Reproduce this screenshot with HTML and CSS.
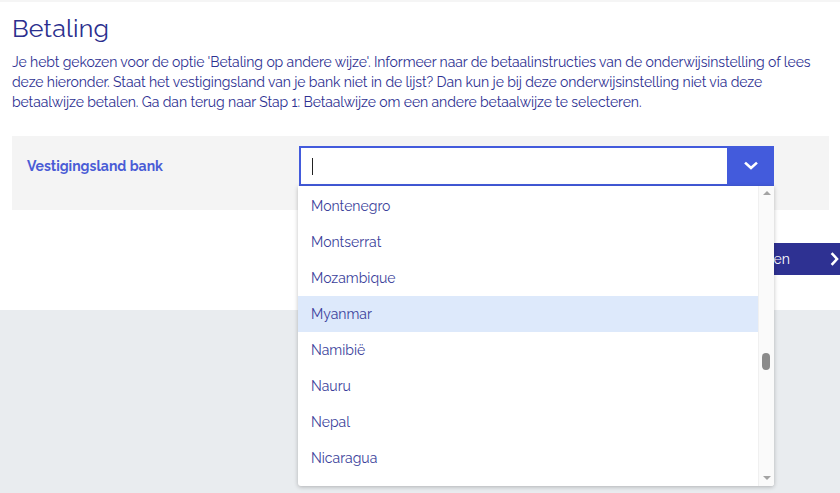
FILE: index.html
```html
<!DOCTYPE html>
<html lang="nl">
<head>
    <meta charset="UTF-8">
    <meta name="viewport" content="width=device-width, initial-scale=1.0">
    <title>Betaling</title>
    <link rel="stylesheet" href="styles.css">
</head>
<body>
    <div class="page">
        <h1>Betaling</h1>
        <p class="intro">Je hebt gekozen voor de optie 'Betaling op andere wijze'. Informeer naar de betaalinstructies van de onderwijsinstelling of lees deze hieronder. Staat het vestigingsland van je bank niet in de lijst? Dan kun je bij deze onderwijsinstelling niet via deze betaalwijze betalen. Ga dan terug naar Stap 1: Betaalwijze om een andere betaalwijze te selecteren.</p>

        <div class="panel">
            <label class="field-label" for="country">Vestigingsland bank</label>
            <div class="combo">
                <div class="combo-box">
                    <input type="text" id="country" class="combo-input" autocomplete="off">
                    <span class="caret"></span>
                    <button class="combo-toggle" type="button">
                        <svg width="14" height="10" viewBox="0 0 14 10"><path d="M2 2.5 L7 7 L12 2.5" fill="none" stroke="#fff" stroke-width="2.6" stroke-linecap="square"/></svg>
                    </button>
                </div>
                <div class="dropdown">
                    <ul class="options">
                        <li>Montenegro</li>
                        <li>Montserrat</li>
                        <li>Mozambique</li>
                        <li class="active">Myanmar</li>
                        <li>Namibië</li>
                        <li>Nauru</li>
                        <li>Nepal</li>
                        <li>Nicaragua</li>
                    </ul>
                    <div class="scrollbar">
                        <span class="arrow up"></span>
                        <span class="track"><span class="thumb"></span></span>
                        <span class="arrow down"></span>
                    </div>
                </div>
            </div>
        </div>

        <div class="actions">
            <button class="next" type="button">Betalen
                <svg width="10" height="14" viewBox="0 0 10 14"><path d="M2.5 2 L7 7 L2.5 12" fill="none" stroke="#fff" stroke-width="2.6" stroke-linecap="square"/></svg>
            </button>
        </div>
    </div>
</body>
</html>
```

FILE: styles.css
```css
html, body {
    height: 100%;
}
body {
    margin: 0;
    font-family: "Raleway", Lato, "Open Sans", sans-serif;
    background-color: #e9ecef;
    color: #2e3192;
}
.page {
    background: #fff;
    border-top: 2px solid #f5f5f5;
    height: 308px;
    padding: 0 11px 0 12px;
}
h1 {
    margin: 0;
    padding-top: 10px;
    font-size: 25px;
    line-height: 32px;
    font-weight: 400;
    color: #2b2f8e;
    letter-spacing: 0.2px;
}
.intro {
    margin: 8px 0 0;
    font-size: 14px;
    line-height: 20px;
    letter-spacing: -0.1px;
}
.panel {
    display: flex;
    margin-top: 24px;
    height: 74px;
    padding: 10px 0 0 15px;
    box-sizing: border-box;
    background: #f4f4f4;
}
.field-label {
    width: 272px;
    font-size: 14px;
    font-weight: 700;
    color: #4a5cd6;
    line-height: 40px;
}
.combo {
    position: relative;
    width: 475px;
}
.combo-box {
    display: flex;
    height: 40px;
    box-sizing: border-box;
    border: 2px solid #435bdc;
    background: #fff;
    position: relative;
}
.combo-input {
    flex: 1;
    border: none;
    outline: none;
    padding: 0 12px;
    font: inherit;
    background: transparent;
}
.caret {
    position: absolute;
    left: 11px;
    top: 10px;
    width: 1px;
    height: 17px;
    background: #222;
}
.combo-toggle {
    width: 47px;
    margin: -2px -2px -2px 0;
    border: none;
    background: #435bdc;
    display: flex;
    align-items: center;
    justify-content: center;
    padding: 0;
}
.dropdown {
    position: absolute;
    top: 40px;
    left: -1px;
    width: 476px;
    height: 300px;
    display: flex;
    background: #fff;
    border-radius: 0 0 3px 3px;
    box-shadow: 0 1px 4px rgba(0, 0, 0, 0.25);
    overflow: hidden;
    z-index: 5;
}
.options {
    list-style: none;
    margin: 0;
    padding: 2px 0 0;
    flex: 1;
}
.options li {
    height: 36px;
    line-height: 36px;
    padding-left: 13px;
    font-size: 14px;
    color: #3b3f9b;
}
.options li.active {
    background: #dde9fb;
}
.scrollbar {
    width: 15px;
    display: flex;
    flex-direction: column;
    align-items: center;
    background: #fafafa;
    border-left: 1px solid #f0f0f0;
}
.arrow {
    width: 0;
    height: 0;
    border-left: 4px solid transparent;
    border-right: 4px solid transparent;
}
.arrow.up {
    margin-top: 5px;
    border-bottom: 4px solid #a3a3a3;
}
.arrow.down {
    margin-bottom: 6px;
    border-top: 4px solid #a3a3a3;
}
.track {
    flex: 1;
    position: relative;
    width: 100%;
}
.thumb {
    position: absolute;
    left: 3px;
    top: 158px;
    width: 8px;
    height: 17px;
    border-radius: 4px;
    background: #8a8a8a;
}
.actions {
    display: flex;
    justify-content: flex-end;
    margin: 33px -11px 0 0;
}
.next {
    display: flex;
    align-items: center;
    gap: 40px;
    height: 32px;
    padding: 0 0 0 20px;
    border: none;
    background: #2e3192;
    color: #fff;
    font: inherit;
    font-size: 14px;
}
```
